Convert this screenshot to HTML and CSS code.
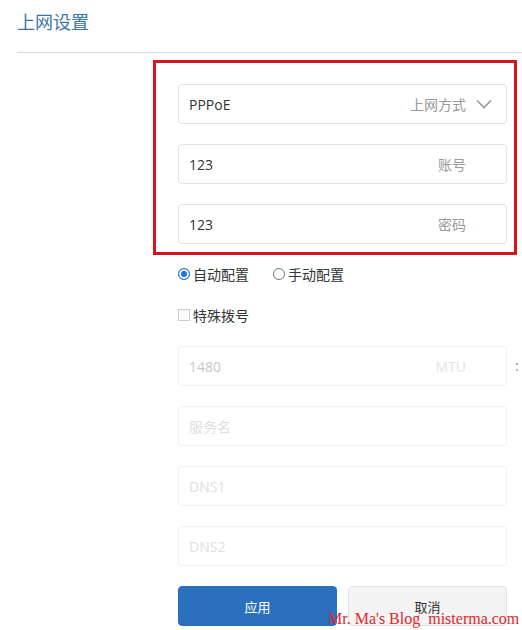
FILE: index.html
```html
<!DOCTYPE html>
<html lang="zh-CN">
<head>
  <meta charset="UTF-8">
  <meta name="viewport" content="width=device-width, initial-scale=1.0">
  <title>上网设置</title>
  <link rel="stylesheet" href="styles.css">
</head>
<body>
  <header class="page-head">
    <h1>上网设置</h1>
  </header>

  <div class="form">
    <div class="highlight">
      <div class="field">
        <span class="value">PPPoE</span>
        <span class="label">上网方式</span>
        <svg class="chevron" width="16" height="10" viewBox="0 0 16 10">
          <path d="M1 1.5 L8 8.5 L15 1.5" fill="none" stroke="#9a9a9a" stroke-width="1.6"/>
        </svg>
      </div>
      <div class="field">
        <span class="value">123</span>
        <span class="label pad">账号</span>
      </div>
      <div class="field">
        <span class="value">123</span>
        <span class="label pad">密码</span>
      </div>
    </div>

    <div class="radios">
      <label class="radio"><span class="dot checked"></span>自动配置</label>
      <label class="radio"><span class="dot"></span>手动配置</label>
    </div>

    <label class="check"><span class="box"></span>特殊拨号</label>

    <div class="row">
      <div class="field disabled">
        <span class="value">1480</span>
        <span class="label pad">MTU</span>
      </div>
      <span class="colon">：</span>
    </div>
    <div class="field disabled"><span class="placeholder">服务名</span></div>
    <div class="field disabled"><span class="placeholder">DNS1</span></div>
    <div class="field disabled"><span class="placeholder">DNS2</span></div>

    <div class="buttons">
      <button class="btn primary">应用</button>
      <button class="btn">取消</button>
    </div>
  </div>

  <div class="watermark">Mr. Ma's Blog  misterma.com</div>
</body>
</html>
```

FILE: styles.css
```css
body {
  margin: 0;
  font-family: "Open Sans", "Noto Sans CJK SC", sans-serif;
  font-size: 14px;
  color: #333;
  background: #fff;
  overflow: hidden;
  height: 630px;
  position: relative;
}
.page-head {
  margin-left: 17px;
  height: 52px;
  border-bottom: 1px solid #dcdcdc;
}
.page-head h1 {
  margin: 0;
  padding-top: 10px;
  font-size: 18px;
  font-weight: normal;
  color: #3b76a6;
  line-height: 24px;
}
.form {
  margin-left: 178px;
  width: 329px;
}
.highlight {
  margin: 7px -10px 0 -25px;
  padding: 21px 7px 8px 22px;
  border: 3px solid #d7141c;
}
.field {
  height: 40px;
  box-sizing: border-box;
  border: 1px solid #e3e3e3;
  border-radius: 4px;
  display: flex;
  align-items: center;
  padding: 0 14px 0 10px;
  margin-bottom: 20px;
  background: #fff;
}
.highlight .field:last-child {
  margin-bottom: 0;
}
.value {
  flex: 1;
  color: #333;
}
.label {
  color: #999;
  font-size: 14px;
}
.label.pad {
  padding-right: 26px;
}
.chevron {
  margin-left: 10px;
}
.radios {
  display: flex;
  gap: 24px;
  margin-top: 9px;
  height: 20px;
  align-items: center;
}
.radio, .check {
  display: flex;
  align-items: center;
  gap: 3px;
  color: #333;
  font-size: 14px;
}
.dot {
  width: 12px;
  height: 12px;
  border: 1px solid #777;
  border-radius: 50%;
  box-sizing: border-box;
}
.dot.checked {
  border: 1px solid #1a73e8;
  background: #1a73e8;
  box-shadow: inset 0 0 0 2px #fff;
}
.check {
  margin-top: 21px;
  height: 20px;
  margin-bottom: 21px;
}
.box {
  width: 12px;
  height: 12px;
  border: 1px solid #cdcdcd;
  box-sizing: border-box;
}
.row {
  display: flex;
  align-items: center;
  width: 360px;
  margin-bottom: 20px;
}
.row .field {
  width: 329px;
  flex: none;
  margin-bottom: 0;
}
.colon {
  margin-left: 7px;
  color: #888;
  font-size: 12px;
}
.field.disabled {
  border-color: #f2f2f2;
}
.field.disabled .value {
  color: #c8c8c8;
}
.field.disabled .label {
  color: #e3e3e3;
}
.placeholder {
  color: #e0e0e0;
}
.buttons {
  display: flex;
  gap: 11px;
}
.btn {
  width: 159px;
  height: 40px;
  border: 1px solid #e2e2e2;
  border-radius: 4px;
  background: #f4f4f4;
  color: #333;
  font-family: "Noto Sans CJK SC", sans-serif;
  font-size: 13px;
}
.btn.primary {
  background: #2a70bd;
  border-color: #2a70bd;
  color: #fff;
}
.watermark {
  position: absolute;
  left: 328px;
  top: 610px;
  font-family: "Liberation Serif", serif;
  font-size: 16px;
  color: #e5252b;
  white-space: pre;
}
```
